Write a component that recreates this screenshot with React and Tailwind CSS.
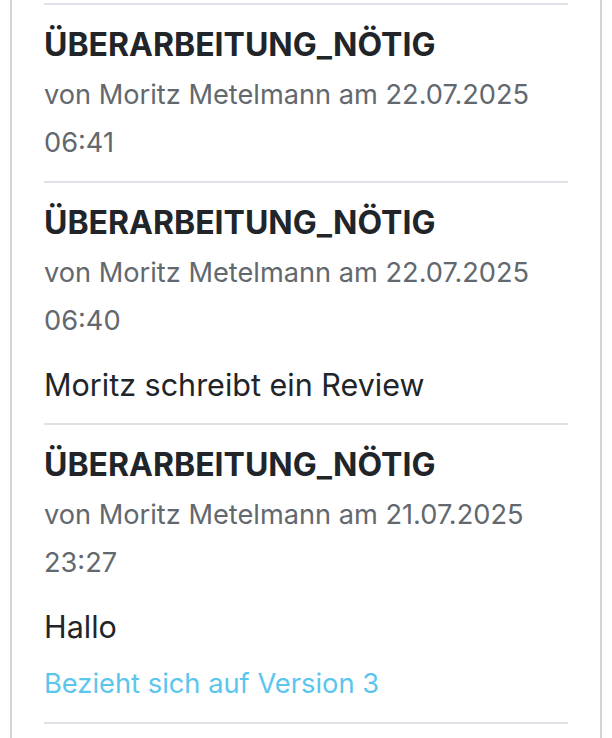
const entries = [
  {
    status: 'ÜBERARBEITUNG_NÖTIG',
    meta: 'von Moritz Metelmann am 22.07.2025 06:41',
  },
  {
    status: 'ÜBERARBEITUNG_NÖTIG',
    meta: 'von Moritz Metelmann am 22.07.2025 06:40',
    comment: 'Moritz schreibt ein Review',
  },
  {
    status: 'ÜBERARBEITUNG_NÖTIG',
    meta: 'von Moritz Metelmann am 21.07.2025 23:27',
    comment: 'Hallo',
    version: 3,
  },
];

function App() {
  return (
    <div className="min-h-screen bg-white px-[10px] font-['Inter',sans-serif]">
      <div className="min-h-[760px] border-x-2 border-[#d4d4d4] px-8 pt-[3px]">
        {entries.map((e, i) => (
          <div key={i} className="border-t-2 border-[#dee2e6] pt-[21px] pb-[14px]">
            <h5 className="text-[32px] font-bold leading-[38px] text-[#212529]">{e.status}</h5>
            <p className="mt-[7px] text-[27.2px] leading-[48px] text-[#62686e]">{e.meta}</p>
            {e.comment && (
              <p className="mt-[16px] text-[30.5px] leading-[48px] text-[#212529]">{e.comment}</p>
            )}
            {e.version && (
              <a href="#" className="mt-[13px] mb-[4px] block text-[27.3px] leading-[40px] text-[#5bc6ec]">
                Bezieht sich auf Version {e.version}
              </a>
            )}
          </div>
        ))}
        <div className="border-t-2 border-[#dee2e6]" />
      </div>
    </div>
  );
}

export default App;
